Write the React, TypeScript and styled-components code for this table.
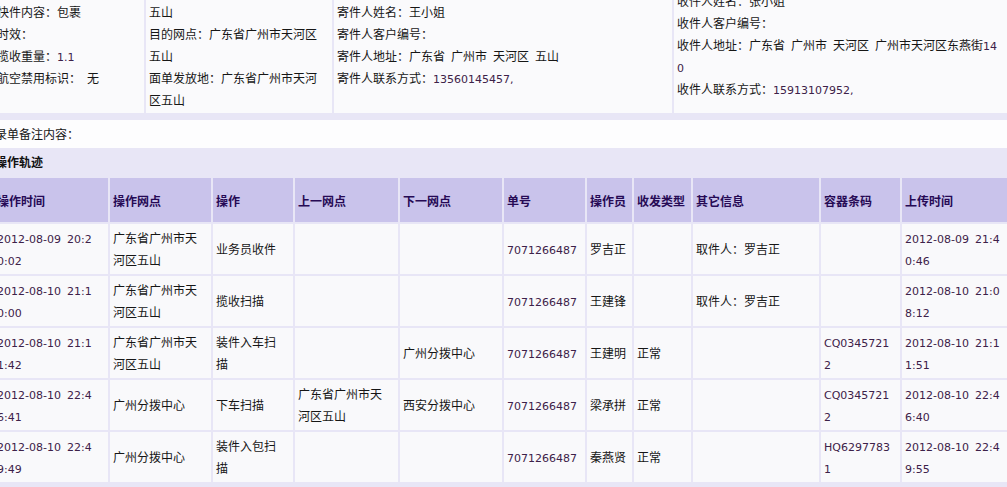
import React from "react";
import styled, { createGlobalStyle } from "styled-components";

const LAV = "#e8e6f6";

const Global = createGlobalStyle`
  html, body { margin: 0; padding: 0; background: ${LAV}; }
  body { font-family: "Noto Sans CJK SC", "Noto Sans", sans-serif; font-size: 12px; color: #161616; }
`;

const Viewport = styled.div`
  width: 1007px;
  height: 487px;
  overflow: hidden;
  background: ${LAV};
`;

const Sheet = styled.div`
  margin: -29px 0 0 -8px;
  width: 1024px;
`;

const Latin = styled.span`
  font-family: "DejaVu Sans", "Liberation Sans", sans-serif;
  font-size: 11px;
  line-height: 11px;
  word-spacing: 2.5px;
  color: #3d2149;
`;

const Table = styled.table<{ $w: number }>`
  border-collapse: separate;
  border-spacing: 2px;
  table-layout: fixed;
  width: ${(p) => p.$w}px;
  background: ${LAV};
`;

const Col = styled.col<{ $w: number }>`
  width: ${(p) => p.$w}px;
`;

const InfoCell = styled.td`
  box-sizing: border-box;
  padding: 6px 4px 2px 3px;
  vertical-align: middle;
  background: #fafafc;
  line-height: 22px;
  word-break: break-all;
`;

const Line = styled.div`
  min-height: 22px;
`;

const RemarkBar = styled.div`
  margin-top: 5px;
  height: 28px;
  line-height: 28px;
  padding-left: 3px;
  background: #fdfdfe;
`;

const TitleBar = styled.div`
  height: 28px;
  line-height: 28px;
  padding-left: 3px;
  font-weight: 700;
  color: #111;
`;

const HeadCell = styled.th`
  box-sizing: border-box;
  height: 44px;
  padding: 0 6px 0 3px;
  background: #c9c3eb;
  color: #260a55;
  font-weight: 700;
  text-align: left;
  vertical-align: middle;
  white-space: nowrap;
  overflow: hidden;
`;

const DataCell = styled.td`
  box-sizing: border-box;
  height: 50px;
  padding: 3px 6px 3px 3px;
  background: #f9f9fb;
  line-height: 22px;
  vertical-align: middle;
  word-break: break-all;
`;

function Txt({ s }: { s: string }) {
  const parts = s.split(/([\x00-\x7f]+)/).filter((p) => p.length > 0);
  return (
    <>
      {parts.map((p, i) =>
        /^[\x00-\x7f]+$/.test(p) ? <Latin key={i}>{p}</Latin> : <React.Fragment key={i}>{p}</React.Fragment>
      )}
    </>
  );
}

const infoCols = [150, 186, 338, 333];
const info: string[][] = [
  ["快件内容：包裹", "时效：", "揽收重量：1.1", "航空禁用标识： 无"],
  ["始发网点：广东省广州市天河区五山", "目的网点：广东省广州市天河区五山", "面单发放地：广东省广州市天河区五山"],
  ["寄件人姓名：王小姐", "寄件人客户编号：", "寄件人地址：广东省 广州市 天河区 五山", "寄件人联系方式：13560145457,"],
  ["收件人姓名：张小姐", "收件人客户编号：", "收件人地址：广东省 广州市 天河区 广州市天河区东燕街140", "收件人联系方式：15913107952,"],
];

const trackCols = [114, 101, 80, 103, 102, 81, 45, 57, 126, 79, 112];
const heads = ["操作时间", "操作网点", "操作", "上一网点", "下一网点", "单号", "操作员", "收发类型", "其它信息", "容器条码", "上传时间"];
const rows: string[][] = [
  ["2012-08-09 20:20:02", "广东省广州市天河区五山", "业务员收件", "", "", "7071266487", "罗吉正", "", "取件人：罗吉正", "", "2012-08-09 21:40:46"],
  ["2012-08-10 21:10:00", "广东省广州市天河区五山", "揽收扫描", "", "", "7071266487", "王建锋", "", "取件人：罗吉正", "", "2012-08-10 21:08:12"],
  ["2012-08-10 21:11:42", "广东省广州市天河区五山", "装件入车扫描", "", "广州分拨中心", "7071266487", "王建明", "正常", "", "CQ03457212", "2012-08-10 21:11:51"],
  ["2012-08-10 22:46:41", "广州分拨中心", "下车扫描", "广东省广州市天河区五山", "西安分拨中心", "7071266487", "梁承拼", "正常", "", "CQ03457212", "2012-08-10 22:46:40"],
  ["2012-08-10 22:49:49", "广州分拨中心", "装件入包扫描", "", "", "7071266487", "秦燕贤", "正常", "", "HQ62977831", "2012-08-10 22:49:55"],
];

export default function App() {
  return (
    <>
      <Global />
      <Viewport>
        <Sheet>
          <Table $w={1017}>
            <colgroup>
              {infoCols.map((w, i) => (
                <Col key={i} $w={w} />
              ))}
            </colgroup>
            <tbody>
              <tr>
                {info.map((lines, i) => (
                  <InfoCell key={i}>
                    {lines.map((l, j) => (
                      <Line key={j}>
                        <Txt s={l} />
                      </Line>
                    ))}
                  </InfoCell>
                ))}
              </tr>
            </tbody>
          </Table>
          <RemarkBar>录单备注内容：</RemarkBar>
          <TitleBar>操作轨迹</TitleBar>
          <Table $w={1024}>
            <colgroup>
              {trackCols.map((w, i) => (
                <Col key={i} $w={w} />
              ))}
            </colgroup>
            <thead>
              <tr>
                {heads.map((h) => (
                  <HeadCell key={h}>{h}</HeadCell>
                ))}
              </tr>
            </thead>
            <tbody>
              {rows.map((r, i) => (
                <tr key={i}>
                  {r.map((c, j) => (
                    <DataCell key={j}>
                      <Txt s={c} />
                    </DataCell>
                  ))}
                </tr>
              ))}
            </tbody>
          </Table>
        </Sheet>
      </Viewport>
    </>
  );
}
